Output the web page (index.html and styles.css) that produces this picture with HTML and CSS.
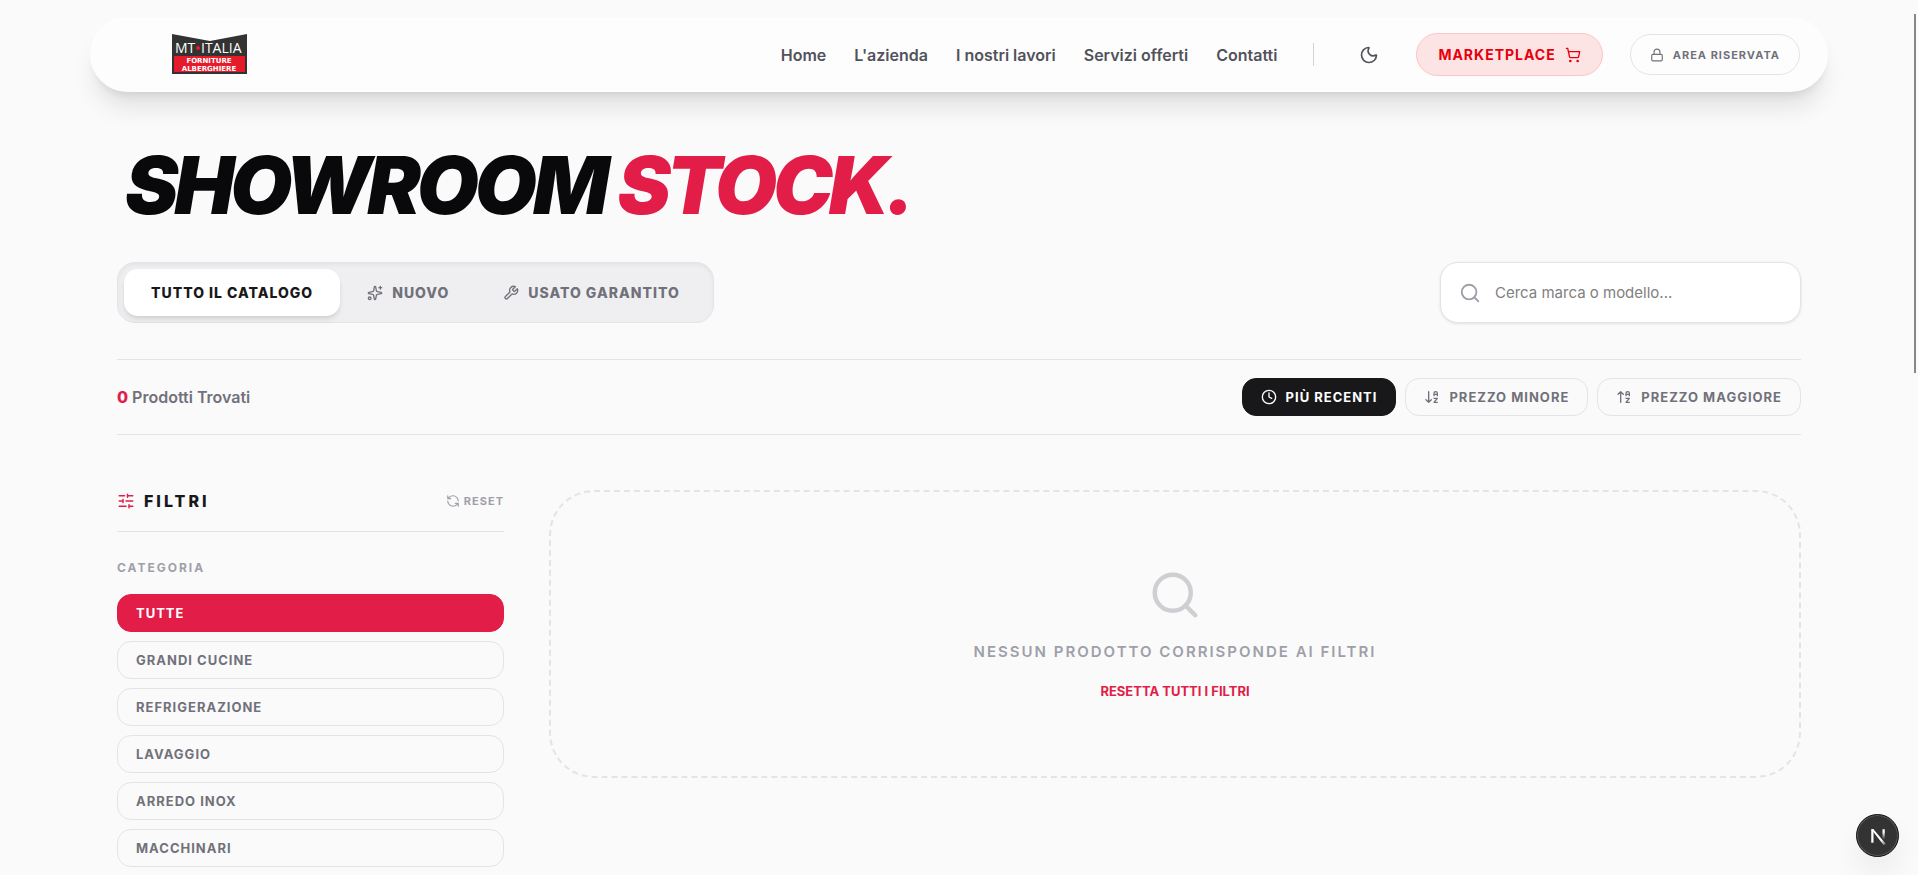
FILE: index.html
```html
<!DOCTYPE html>
<html lang="it">
<head>
  <meta charset="UTF-8">
  <meta name="viewport" content="width=device-width, initial-scale=1">
  <title>Showroom Stock</title>
  <link rel="stylesheet" href="styles.css">
</head>
<body>

<header class="navbar">
  <a class="logo" href="#" aria-label="MT Italia">
    <svg width="75" height="40" viewBox="0 0 75 40">
      <path d="M0 0 L38 7 L75 0 V40 H0 Z" fill="#333"/>
      <rect x="2" y="22" width="71" height="16" fill="#e51b2b"/>
      <text class="logo-name" x="3" y="19">MT</text>
      <circle cx="26" cy="14" r="2" fill="#e51b2b"/>
      <text class="logo-name" x="29" y="19">ITALIA</text>
      <text class="logo-sub" x="37" y="29">FORNITURE</text>
      <text class="logo-sub" x="37" y="37">ALBERGHIERE</text>
    </svg>
  </a>

  <div class="nav-right">
    <nav class="nav-links">
      <a href="#">Home</a>
      <a href="#">L'azienda</a>
      <a href="#">I nostri lavori</a>
      <a href="#">Servizi offerti</a>
      <a href="#">Contatti</a>
    </nav>
    <span class="divider"></span>
    <button class="theme-btn" type="button" aria-label="Tema">
      <svg class="icon" width="20" height="20" viewBox="0 0 24 24"><path d="M20.985 12.486a9 9 0 1 1-9.473-9.472c.405-.022.617.46.402.803a6 6 0 0 0 8.268 8.268c.344-.215.825-.004.803.401"/></svg>
    </button>
    <a class="market-btn" href="#">MARKETPLACE
      <svg class="icon" width="16" height="16" viewBox="0 0 24 24"><circle cx="8" cy="21" r="1"/><circle cx="19" cy="21" r="1"/><path d="M2.05 2.05h2l2.66 12.42a2 2 0 0 0 2 1.58h9.78a2 2 0 0 0 1.95-1.57l1.65-7.43H5.12"/></svg>
    </a>
    <a class="area-btn" href="#">
      <svg class="icon" width="14" height="14" viewBox="0 0 24 24"><rect x="3" y="11" width="18" height="11" rx="2"/><path d="M7 11V7a5 5 0 0 1 10 0v4"/></svg>
      AREA RISERVATA
    </a>
  </div>
</header>

<main class="container">
  <h1 class="title">SHOWROOM <span>STOCK.</span></h1>

  <div class="toolbar">
    <div class="tabs">
      <button class="tab active" type="button">TUTTO IL CATALOGO</button>
      <button class="tab" type="button">
        <svg class="icon" width="16" height="16" viewBox="0 0 24 24"><path d="M11.017 2.814a1 1 0 0 1 1.966 0l1.051 5.558a2 2 0 0 0 1.594 1.594l5.558 1.051a1 1 0 0 1 0 1.966l-5.558 1.051a2 2 0 0 0-1.594 1.594l-1.051 5.558a1 1 0 0 1-1.966 0l-1.051-5.558a2 2 0 0 0-1.594-1.594l-5.558-1.051a1 1 0 0 1 0-1.966l5.558-1.051a2 2 0 0 0 1.594-1.594z"/><path d="M20 2v4M22 4h-4"/><circle cx="4" cy="20" r="2"/></svg>
        NUOVO
      </button>
      <button class="tab" type="button">
        <svg class="icon" width="16" height="16" viewBox="0 0 24 24"><path d="M14.7 6.3a1 1 0 0 0 0 1.4l1.6 1.6a1 1 0 0 0 1.4 0l3.77-3.77a6 6 0 0 1-7.94 7.94l-6.91 6.91a2.12 2.12 0 0 1-3-3l6.91-6.91a6 6 0 0 1 7.94-7.94l-3.76 3.76z"/></svg>
        USATO GARANTITO
      </button>
    </div>

    <label class="search">
      <svg class="icon" width="22" height="22" viewBox="0 0 24 24"><circle cx="11" cy="11" r="8"/><path d="m21 21-4.34-4.34"/></svg>
      <input type="text" placeholder="Cerca marca o modello..." aria-label="Cerca marca o modello">
    </label>
  </div>

  <div class="results-bar">
    <p class="count"><strong>0</strong> Prodotti Trovati</p>
    <div class="sorts">
      <button class="sort active" type="button">
        <svg class="icon" width="16" height="16" viewBox="0 0 24 24"><circle cx="12" cy="12" r="10"/><path d="M12 6v6l4 2"/></svg>
        PIÙ RECENTI
      </button>
      <button class="sort" type="button">
        <svg class="icon" width="16" height="16" viewBox="0 0 24 24"><path d="m3 16 4 4 4-4M7 20V4M20 8h-5M15 10V6.5a2.5 2.5 0 0 1 5 0V10M15 14h5l-5 6h5"/></svg>
        PREZZO MINORE
      </button>
      <button class="sort" type="button">
        <svg class="icon" width="16" height="16" viewBox="0 0 24 24"><path d="m3 8 4-4 4 4M7 4v16M20 8h-5M15 10V6.5a2.5 2.5 0 0 1 5 0V10M15 14h5l-5 6h5"/></svg>
        PREZZO MAGGIORE
      </button>
    </div>
  </div>

  <div class="catalog">
    <aside class="filters">
      <div class="filters-head">
        <h2>
          <svg class="icon" width="18" height="18" viewBox="0 0 24 24"><path d="M10 5H3M12 19H3M14 3v4M16 17v4M21 12h-9M21 19h-5M21 5h-7M8 10v4M8 12H3"/></svg>
          FILTRI
        </h2>
        <button class="reset" type="button">
          <svg class="icon" width="14" height="14" viewBox="0 0 24 24"><path d="M21 12a9 9 0 0 0-9-9 9.75 9.75 0 0 0-6.74 2.74L3 8M3 3v5h5M3 12a9 9 0 0 0 9 9 9.75 9.75 0 0 0 6.74-2.74L21 16M16 16h5v5"/></svg>
          RESET
        </button>
      </div>
      <h3>CATEGORIA</h3>
      <div class="categories">
        <button class="category active" type="button">TUTTE</button>
        <button class="category" type="button">GRANDI CUCINE</button>
        <button class="category" type="button">REFRIGERAZIONE</button>
        <button class="category" type="button">LAVAGGIO</button>
        <button class="category" type="button">ARREDO INOX</button>
        <button class="category" type="button">MACCHINARI</button>
      </div>
    </aside>

    <section class="empty">
      <svg class="icon" width="54" height="54" viewBox="0 0 24 24"><circle cx="11" cy="11" r="8"/><path d="m21 21-4.34-4.34"/></svg>
      <p>NESSUN PRODOTTO CORRISPONDE AI FILTRI</p>
      <button type="button">RESETTA TUTTI I FILTRI</button>
    </section>
  </div>
</main>

<div class="scroll-thumb"></div>

<button class="dev-badge" type="button" aria-label="Dev tools">
  <svg width="18" height="18" viewBox="0 0 16 16">
    <defs>
      <linearGradient id="stem" x1="0" y1="0" x2="0" y2="1"><stop offset="0.3" stop-color="#fff"/><stop offset="1" stop-color="#fff" stop-opacity="0"/></linearGradient>
      <linearGradient id="diag" x1="0" y1="0" x2="1" y2="1"><stop offset="0.7" stop-color="#fff"/><stop offset="1" stop-color="#fff" stop-opacity="0.2"/></linearGradient>
    </defs>
    <rect x="2" y="2" width="2" height="12" fill="#fff"/>
    <path d="M2 2h2l11 13-2 1z" fill="url(#diag)"/>
    <rect x="12" y="2" width="2" height="9" fill="url(#stem)"/>
  </svg>
</button>

</body>
</html>
```
FILE: styles.css
```css
* {
  box-sizing: border-box;
}
body {
  margin: 0;
  background: #fafafa;
  color: #18181b;
  font-family: Inter, "Liberation Sans", sans-serif;
  font-size: 16px;
}
h1, h2, h3, p {
  margin: 0;
}
a {
  color: inherit;
  text-decoration: none;
}
button, input {
  font: inherit;
  color: inherit;
  background: none;
  border: none;
  padding: 0;
}
button {
  cursor: pointer;
}
.icon {
  fill: none;
  stroke: currentColor;
  stroke-width: 2;
  stroke-linecap: round;
  stroke-linejoin: round;
  flex-shrink: 0;
}

/* Navbar */
.navbar {
  display: flex;
  align-items: center;
  justify-content: space-between;
  max-width: 1738px;
  height: 75px;
  margin: 17px auto 0;
  padding: 0 28px 0 82px;
  border-radius: 38px;
  background: #fdfdfd;
  box-shadow: 0 20px 25px -5px rgba(0,0,0,0.1), 0 8px 10px -6px rgba(0,0,0,0.1);
}
.logo {
  padding-bottom: 1px;
}
.logo svg {
  display: block;
}
.logo-name {
  font: 14px "Open Sans", sans-serif;
  fill: #fff;
}
.logo-sub {
  font: bold 7px "DejaVu Sans", sans-serif;
  fill: #fff;
  text-anchor: middle;
}
.nav-right {
  display: flex;
  align-items: center;
}
.nav-links {
  display: flex;
  gap: 28px;
  font-weight: 600;
  color: #52525b;
}
.divider {
  width: 1px;
  height: 23px;
  margin: 0 36px;
  background: #d4d4d8;
}
.theme-btn {
  display: flex;
  padding: 9px;
  color: #52525b;
}
.market-btn, .area-btn {
  display: flex;
  align-items: center;
  gap: 9px;
  border-radius: 22px;
  font-weight: 700;
  letter-spacing: 1px;
}
.market-btn {
  height: 43px;
  margin: 0 27px 0 28px;
  padding: 0 21px;
  border: 1px solid #ffc4c8;
  background: #fce3e4;
  color: #e7000b;
  font-size: 14px;
}
.area-btn {
  height: 41px;
  padding: 0 19px;
  border: 1px solid #e4e4e7;
  color: #71717b;
  font-size: 11px;
}

/* Page */
.container {
  max-width: 1684px;
  margin: 0 auto;
}
.title {
  padding: 53px 8px 0;
  font-size: 80px;
  line-height: 80px;
  font-weight: 900;
  font-style: italic;
  letter-spacing: -4px;
  color: #09090b;
}
.title span {
  color: #e11d48;
}
.toolbar {
  display: flex;
  align-items: center;
  justify-content: space-between;
  margin: 37px 0 36px;
}
.tabs {
  display: flex;
  padding: 6px;
  border: 1px solid #e4e4e7;
  border-radius: 18px;
  background: #efeff1;
  box-shadow: inset 0 2px 4px rgba(0,0,0,0.05);
}
.tab {
  display: flex;
  align-items: center;
  gap: 9px;
  height: 47px;
  padding: 0 27px;
  border-radius: 14px;
  color: #71717b;
  font-size: 14px;
  font-weight: 800;
  letter-spacing: 1px;
}
.tab.active {
  background: #fff;
  color: #18181b;
  box-shadow: 0 4px 6px -1px rgba(0,0,0,0.1), 0 2px 4px -2px rgba(0,0,0,0.1);
}
.search {
  display: flex;
  align-items: center;
  gap: 14px;
  width: 361px;
  height: 61px;
  padding: 0 18px;
  border: 1px solid #e4e4e7;
  border-radius: 18px;
  background: #fff;
  color: #9f9fa9;
  box-shadow: 0 1px 3px rgba(0,0,0,0.1);
}
.search input {
  flex: 1;
  min-width: 0;
  outline: none;
  color: #18181b;
  font-size: 15px;
}
.search input::placeholder {
  color: #808080;
}
.results-bar {
  display: flex;
  align-items: center;
  justify-content: space-between;
  height: 76px;
  border-top: 1px solid #e4e4e7;
  border-bottom: 1px solid #e4e4e7;
}
.count {
  color: #71717b;
  font-weight: 600;
}
.count strong {
  color: #e11d48;
  font-weight: 800;
}
.sorts {
  display: flex;
  gap: 9px;
}
.sort {
  display: flex;
  align-items: center;
  gap: 9px;
  height: 38px;
  padding: 0 18px;
  border: 1px solid #e4e4e7;
  border-radius: 14px;
  color: #71717b;
  font-size: 13px;
  font-weight: 700;
  letter-spacing: 1px;
}
.sort.active {
  border-color: #18181b;
  background: #18181b;
  color: #fff;
}

/* Catalog */
.catalog {
  display: flex;
  align-items: flex-start;
  gap: 45px;
  margin-top: 55px;
}
.filters {
  width: 387px;
  flex-shrink: 0;
}
.filters-head {
  display: flex;
  align-items: center;
  justify-content: space-between;
  height: 42px;
  padding-bottom: 20px;
  border-bottom: 1px solid #e4e4e7;
}
.filters h2 {
  display: flex;
  align-items: center;
  gap: 9px;
  font-size: 16px;
  font-weight: 800;
  letter-spacing: 3px;
}
.filters h2 .icon {
  color: #e11d48;
}
.reset {
  display: flex;
  align-items: center;
  gap: 4px;
  color: #9f9fa9;
  font-size: 11px;
  font-weight: 700;
  letter-spacing: 1px;
}
.filters h3 {
  margin: 27px 0 18px;
  color: #9f9fa9;
  font-size: 12px;
  line-height: 17px;
  font-weight: 700;
  letter-spacing: 2px;
}
.categories {
  display: flex;
  flex-direction: column;
  gap: 9px;
}
.category {
  height: 38px;
  padding: 0 18px;
  border: 1px solid #e4e4e7;
  border-radius: 14px;
  color: #71717b;
  font-size: 13px;
  font-weight: 700;
  letter-spacing: 1px;
  text-align: left;
}
.category.active {
  border-color: #e11d48;
  background: #e11d48;
  color: #fff;
}
.empty {
  display: flex;
  flex: 1;
  flex-direction: column;
  align-items: center;
  padding: 76px 24px;
  border: 2px dashed #e4e4e7;
  border-radius: 45px;
  color: #9f9fa9;
}
.empty .icon {
  color: #cfcfd3;
}
.empty p {
  margin: 18px 0;
  font-size: 15px;
  line-height: 24px;
  font-weight: 600;
  letter-spacing: 2px;
}
.empty button {
  color: #e11d48;
  font-size: 13px;
  line-height: 18px;
  font-weight: 700;
}

.scroll-thumb {
  position: fixed;
  top: 14px;
  right: 2px;
  width: 2px;
  height: 359px;
  background: #888;
}
.dev-badge {
  position: fixed;
  right: 19px;
  bottom: 18px;
  display: flex;
  align-items: center;
  justify-content: center;
  width: 43px;
  height: 43px;
  border: 1px solid #111;
  border-radius: 50%;
  background: #333;
  box-shadow: inset 0 0 0 1px #5a5a5a, 0 16px 32px -8px rgba(0,0,0,0.14);
}
```
